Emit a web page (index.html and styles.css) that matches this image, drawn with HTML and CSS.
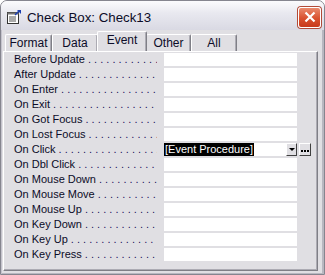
FILE: index.html
```html
<!DOCTYPE html>
<html lang="en">
<head>
    <meta charset="UTF-8">
    <title>Check Box: Check13</title>
    <link rel="stylesheet" href="styles.css">
</head>
<body>
    <div class="window">
        <div class="titlebar">
            <svg class="title-icon" width="16" height="16" viewBox="0 0 16 16">
                <rect x="1.5" y="3.5" width="11" height="11" fill="#fff" stroke="#333"/>
                <rect x="1.5" y="3.5" width="11" height="2" fill="#777"/>
                <path d="M3 8h7M3 10h7M3 12h7" stroke="#555"/>
                <path d="M11 1h4v4z" fill="#1c3fb0"/>
                <path d="M13 2l-4 4" stroke="#1c3fb0" stroke-width="1.5"/>
            </svg>
            <span class="title">Check Box: Check13</span>
            <div class="close-btn">
                <svg width="12" height="12" viewBox="0 0 12 12">
                    <path d="M1.5 1.5l9 9M10.5 1.5l-9 9" stroke="#fff" stroke-width="2.2"/>
                </svg>
            </div>
        </div>

        <div class="content">
            <div class="tabs">
                <div class="tab tab-format">Format</div>
                <div class="tab tab-data">Data</div>
                <div class="tab tab-event active">Event</div>
                <div class="tab tab-other">Other</div>
                <div class="tab tab-all">All</div>
            </div>

            <div class="page">
                <div class="grid">
                    <div class="label">Before Update<span class="dots"></span></div><div class="value"></div><div></div>
                    <div class="label">After Update<span class="dots"></span></div><div class="value"></div><div></div>
                    <div class="label">On Enter<span class="dots"></span></div><div class="value"></div><div></div>
                    <div class="label">On Exit<span class="dots"></span></div><div class="value"></div><div></div>
                    <div class="label">On Got Focus<span class="dots"></span></div><div class="value"></div><div></div>
                    <div class="label">On Lost Focus<span class="dots"></span></div><div class="value"></div><div></div>
                    <div class="label">On Click<span class="dots"></span></div>
                    <div class="value editing">
                        <span class="selected">[Event Procedure]</span>
                        <span class="drop-btn"><span class="arrow"></span></span>
                    </div>
                    <div class="build-cell"><span class="build-btn"><i></i><i></i><i></i></span></div>
                    <div class="label">On Dbl Click<span class="dots"></span></div><div class="value"></div><div></div>
                    <div class="label">On Mouse Down<span class="dots"></span></div><div class="value"></div><div></div>
                    <div class="label">On Mouse Move<span class="dots"></span></div><div class="value"></div><div></div>
                    <div class="label">On Mouse Up<span class="dots"></span></div><div class="value"></div><div></div>
                    <div class="label">On Key Down<span class="dots"></span></div><div class="value"></div><div></div>
                    <div class="label">On Key Up<span class="dots"></span></div><div class="value"></div><div></div>
                    <div class="label">On Key Press<span class="dots"></span></div><div class="value"></div><div></div>
                </div>
            </div>
        </div>
    </div>
</body>
</html>
```

FILE: styles.css
```css
* {
    margin: 0;
    padding: 0;
    box-sizing: border-box;
}

body {
    font-family: 'Liberation Sans', Arial, sans-serif;
    font-size: 11px;
    color: #000;
    background: #fff;
}

.window {
    width: 325px;
    height: 275px;
    background: #e0dfe3;
    border: 1px solid #85858f;
    border-radius: 7px 7px 0 0;
    display: flex;
    flex-direction: column;
    overflow: hidden;
}

/* Title bar */
.titlebar {
    height: 29px;
    flex: none;
    display: flex;
    align-items: center;
    padding: 3px 3px 0 5px;
    background: linear-gradient(#fbfbfd, #e9e9f0 40%, #d9d9e3);
}

.title-icon {
    flex: none;
}

.title {
    margin-left: 5px;
    font-size: 13.3px;
    color: #0c0c28;
}

.close-btn {
    margin-left: auto;
    width: 23px;
    height: 21px;
    border: 1px solid #fff;
    border-radius: 3px;
    background: linear-gradient(#e98a6e, #d9512f 55%, #c8391c);
    box-shadow: 0 0 0 1px #b24a38;
    display: flex;
    justify-content: center;
    align-items: center;
}

/* Body */
.content {
    flex: 1;
    display: flex;
    flex-direction: column;
    padding: 1px 6px 3px 2px;
    box-shadow: inset 1px 0 0 #c4c3cc, inset -2px 0 0 #b8b7c0, inset 0 -1px 0 #b8b7c0;
}

.tabs {
    height: 20px;
    flex: none;
    display: flex;
    align-items: flex-end;
    padding-left: 2px;
}

.tab {
    height: 17px;
    text-align: center;
    line-height: 16px;
    font-size: 12px;
    color: #0c0c28;
    border-top: 1px solid #fff;
    border-left: 1px solid #fff;
    border-right: 1px solid #7f7f86;
    box-shadow: inset -1px 0 0 #acabb3;
    border-radius: 2px 2px 0 0;
}

.tab-format { width: 47px; }
.tab-data { width: 46px; }
.tab-event { width: 50px; }
.tab-other { width: 45px; }
.tab-all { width: 46px; }

.tab.active {
    height: 20px;
    line-height: 16px;
    margin: 0 -1px;
    position: relative;
    background: #e0dfe3;
    z-index: 1;
}

.page {
    flex: 1;
    border-top: 1px solid #fff;
    border-left: 1px solid #fff;
    border-right: 1px solid #7f7f86;
    border-bottom: 1px solid #7f7f86;
    box-shadow: inset -1px -1px 0 #acabb3;
    padding: 1px 0 0 0;
}

.grid {
    display: grid;
    grid-template-columns: 160px 133px 1fr;
    grid-auto-rows: 13px;
    row-gap: 2px;
}

.label {
    display: flex;
    padding-left: 10px;
    padding-right: 7px;
    line-height: 13px;
    color: #0c0c28;
    white-space: nowrap;
    overflow: hidden;
}

.dots {
    flex: 1;
    overflow: hidden;
    padding-left: 3px;
    color: #1a1260;
}

.dots::before {
    content: ". . . . . . . . . . . . . . . . . . . . . . . . . . . . .";
}

.value {
    background: #fff;
}

.value.editing {
    display: flex;
    align-items: stretch;
    line-height: 13px;
}

.selected {
    background: #000;
    color: #fff;
    padding: 0 1px 0 1px;
}

.drop-btn {
    margin-left: auto;
    width: 11px;
    background: #e0dfe3;
    border-top: 1px solid #fff;
    border-left: 1px solid #fff;
    border-right: 1px solid #404040;
    border-bottom: 1px solid #404040;
    display: flex;
    justify-content: center;
    align-items: center;
}

.arrow {
    width: 0;
    height: 0;
    border-left: 3px solid transparent;
    border-right: 3px solid transparent;
    border-top: 3px solid #000;
}

.build-cell {
    padding-left: 2px;
}

.build-btn {
    width: 12px;
    height: 13px;
    background: #e0dfe3;
    border-top: 1px solid #fff;
    border-left: 1px solid #fff;
    border-right: 1px solid #404040;
    border-bottom: 1px solid #404040;
    display: flex;
    justify-content: center;
    align-items: flex-end;
    gap: 1px;
    padding-bottom: 3px;
}

.build-btn i {
    width: 2px;
    height: 2px;
    background: #000;
}
```
